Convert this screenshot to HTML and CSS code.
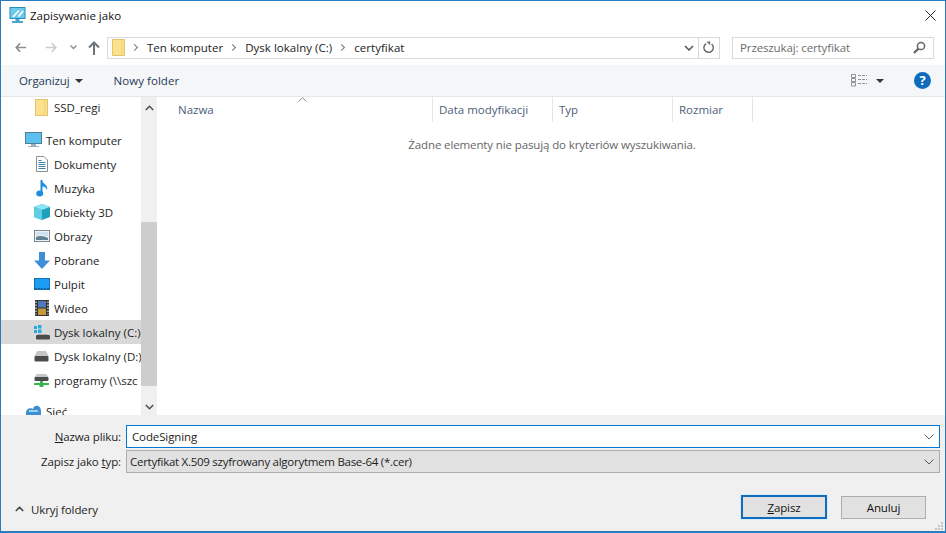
FILE: index.html

```html
<!DOCTYPE html>
<html lang="pl">
<head>
<meta charset="UTF-8">
<title>Zapisywanie jako</title>
<link rel="stylesheet" href="styles.css">
</head>
<body>
<div class="dialog">

  <header class="titlebar">
    <svg class="app-icon" width="17" height="17" viewBox="0 0 17 17">
      <rect x="1" y=".5" width="15" height="11" fill="#6ccbec" stroke="#2a8cb4"/>
      <path d="M4 10 L10 3.500 M9.500 9.500 L14 4" stroke="#fff" stroke-width="1.600"/>
      <path d="M6.500 12 h4 v2 h3.500 v2 h-11 v-2 h3.500z" fill="#46a8cc"/>
    </svg>
    <span class="title">Zapisywanie jako</span>
    <svg class="close" width="11" height="11" viewBox="0 0 11 11"><path d="M.5 .5 L10.500 10.500 M10.500 .5 L.5 10.500" stroke="#222" fill="none"/></svg>
  </header>

  <nav class="navbar">
    <div class="nav-buttons">
      <svg width="12" height="11" viewBox="0 0 14 12"><path d="M6 1 L1.500 6 L6 11 M2 6 H13" fill="none" stroke="#8a8f96" stroke-width="2"/></svg>
      <svg class="nav-forward" width="12" height="11" viewBox="0 0 14 12"><path d="M8 1 L12.500 6 L8 11 M12 6 H1" fill="none" stroke="#c9ccd0" stroke-width="2"/></svg>
      <svg class="nav-recent" width="7" height="5" viewBox="0 0 7 5"><path d="M.5 .5 L3.500 3.500 L6.500 .5" fill="none" stroke="#8a8f96" stroke-width="1.400"/></svg>
      <svg class="nav-up" width="12" height="14" viewBox="0 0 12 14"><path d="M1 6.500 L6 1.500 L11 6.500 M6 2 V14" fill="none" stroke="#6f757c" stroke-width="2"/></svg>
    </div>
    <div class="address">
      <svg class="addr-folder" width="13" height="17" viewBox="0 0 13 17"><path d="M.5 .5 H12.500 V16.500 H.5z" fill="#fbe08e" stroke="#e3c367"/><path d="M10 1 V15" stroke="#f3cf72"/></svg>
      <span class="crumb-sep"></span><span class="crumb">Ten komputer</span>
      <span class="crumb-sep"></span><span class="crumb">Dysk lokalny (C:)</span>
      <span class="crumb-sep"></span><span class="crumb">certyfikat</span>
      <svg class="addr-drop" width="10" height="6" viewBox="0 0 10 6"><path d="M1 1 L5 5 L9 1" fill="none" stroke="#555" stroke-width="1.500"/></svg>
      <div class="addr-refresh">
        <svg width="12" height="13" viewBox="0 0 12 13"><path d="M3.200 2.600 A4.700 4.700 0 1 0 8.600 3" fill="none" stroke="#666" stroke-width="1.400"/><path d="M3.500 .5 L7.100 .5 L7.100 4.200z" fill="#666"/></svg>
      </div>
    </div>
    <div class="search">
      <span class="search-text">Przeszukaj: certyfikat</span>
      <svg width="13" height="13" viewBox="0 0 13 13"><circle cx="8" cy="5" r="3.600" fill="none" stroke="#666" stroke-width="1.500"/><path d="M5.400 7.600 L1 12" stroke="#666" stroke-width="2.200"/></svg>
    </div>
  </nav>

  <div class="toolbar">
    <span class="tool">Organizuj</span>
    <span class="caret caret-org"></span>
    <span class="tool tool-new">Nowy folder</span>
    <svg class="view-icon" width="16" height="13" viewBox="0 0 16 13">
      <g fill="none" stroke="#8d9299"><path d="M.5 .5 h4 v3 h-4z M.5 4.500 h4 v3 h-4z M.5 8.500 h4 v3.500 h-4z"/><path d="M7 1.500 h9 M7 5.500 h9 M7 9.500 h9" stroke-dasharray="3 1"/></g>
    </svg>
    <span class="caret caret-view"></span>
    <span class="help">?</span>
  </div>

  <div class="content">
    <aside class="sidebar">
      <ul class="tree">
        <li class="row row-sub">
          <span class="ico"><svg width="13" height="17" viewBox="0 0 13 17"><path d="M.5 .5 H12.500 V16.500 H.5z" fill="#fbe08e" stroke="#e3c367"/><path d="M10 1 V15" stroke="#f3cf72"/></svg></span>
          SSD_regi
        </li>
        <li class="row row-top row-gap">
          <span class="ico"><svg width="17" height="16" viewBox="0 0 17 16"><rect x=".5" y=".5" width="16" height="11" fill="#5cc0ee" stroke="#4b7f99"/><path d="M6 12 h5 v2 h3 v1 H3 v-1 h3z" fill="#a0aeb8"/></svg></span>
          Ten komputer
        </li>
        <li class="row row-sub">
          <span class="ico"><svg width="12" height="16" viewBox="0 0 12 16"><path d="M.5 .5 H8 L11.500 4 V15.500 H.5z" fill="#fff" stroke="#8a9096"/><path d="M2.500 6.500 h7 M2.500 8.500 h7 M2.500 10.500 h7 M2.500 12.500 h7 M2.500 4.500 h3" stroke="#3f7fa6"/></svg></span>
          Dokumenty
        </li>
        <li class="row row-sub">
          <span class="ico"><svg width="12" height="18" viewBox="0 0 12 18"><path d="M5.500 1 V14" stroke="#1e8fe0" stroke-width="2"/><ellipse cx="3.700" cy="14.500" rx="3.500" ry="3" fill="#1e8fe0"/><path d="M5 0 C6 5 12.500 5 11 11 C10 8 8 7.500 5 7z" fill="#1e8fe0"/></svg></span>
          Muzyka
        </li>
        <li class="row row-sub">
          <span class="ico"><svg width="16" height="16" viewBox="0 0 16 16"><path d="M8 0 L16 3 V13 L8 16 L0 13 V3z" fill="#1fa0bd"/><path d="M8 0 L16 3 L8 6 L0 3z" fill="#8fe4f2"/><path d="M0 3 L8 6 V16 L0 13z" fill="#5fd0e4"/></svg></span>
          Obiekty 3D
        </li>
        <li class="row row-sub">
          <span class="ico"><svg width="16" height="12" viewBox="0 0 16 12"><rect x=".5" y=".5" width="15" height="11" fill="#eef3f7" stroke="#7d868e"/><path d="M2 7 C6 5 10 6 14 8 V10 H2z" fill="#5f7f94"/><path d="M2 2 H14 V7 C10 5 6 5 2 6z" fill="#cfe1ef"/></svg></span>
          Obrazy
        </li>
        <li class="row row-sub">
          <span class="ico"><svg width="16" height="17" viewBox="0 0 16 17"><path d="M5 0 H11 V8.500 H16 L8 17 L0 8.500 H5z" fill="#3f8fd8"/></svg></span>
          Pobrane
        </li>
        <li class="row row-sub">
          <span class="ico"><svg width="16" height="12" viewBox="0 0 16 12"><rect x=".5" y=".5" width="15" height="11" fill="#1c9cf2" stroke="#1472b4"/><path d="M1 10.500 h14" stroke="#0e5f9c" stroke-dasharray="2 1"/></svg></span>
          Pulpit
        </li>
        <li class="row row-sub">
          <span class="ico"><svg width="14" height="16" viewBox="0 0 14 16"><rect width="14" height="16" fill="#333"/><rect x="3" y="1" width="8" height="6.500" fill="#4f79b8"/><rect x="3" y="8.500" width="8" height="6.500" fill="#c49a3a"/><path d="M1 1.500 v13 M13 1.500 v13" stroke="#ddd" stroke-dasharray="1.500 1.500" stroke-width="1.300"/></svg></span>
          Wideo
        </li>
        <li class="row row-sub row-selected">
          <span class="ico"><svg width="16" height="16" viewBox="0 0 16 16"><path d="M0 2 h3 v3 H0z M4 1 h3.500 v3.500 H4z M0 6 h3 v3 H0z M4 5.500 h3.500 v3.500 H4z" fill="#27a9e1"/><path d="M4 10 h9 l2 1 H3z" fill="#aaa"/><rect x="2" y="11" width="14" height="4.500" rx="1" fill="#4c4c4c"/></svg></span>
          Dysk lokalny (C:)
        </li>
        <li class="row row-sub">
          <span class="ico"><svg width="15" height="12" viewBox="0 0 15 12"><path d="M3 1 h9 l2.500 5 H.5z" fill="#c5c5c5"/><rect x=".5" y="6" width="14" height="5.500" rx="1" fill="#4c4c4c"/></svg></span>
          Dysk lokalny (D:)
        </li>
        <li class="row row-sub">
          <span class="ico"><svg width="15" height="13" viewBox="0 0 15 13"><path d="M3 0 h9 l2.500 3 H.5z" fill="#c5c5c5"/><rect x=".5" y="3" width="14" height="4" rx="1" fill="#4c4c4c"/><path d="M6 7 h3 v2 H15 v2 H9.500 v2 H5.500 v-2 H0 v-2 h6z" fill="#39b54a"/></svg></span>
          programy (\\szc
        </li>
        <li class="row row-top row-gap-small">
          <span class="ico"><svg width="17" height="16" viewBox="0 0 17 16"><path d="M1 9 C2 4 7 5 8 6 C9 1 16 2 16 8 V14 H1z" fill="#3d8fd0"/><path d="M4 7 h9 v2 H4z" fill="#9fd2ef"/></svg></span>
          Sieć
        </li>
      </ul>
      <div class="scrollbar">
        <svg class="arrow" width="9" height="6" viewBox="0 0 9 6"><path d="M.8 5 L4.500 1.300 L8.200 5" fill="none" stroke="#505050" stroke-width="1.600"/></svg>
        <div class="track"><div class="thumb"></div></div>
        <svg class="arrow arrow-down" width="9" height="6" viewBox="0 0 9 6"><path d="M.8 1 L4.500 4.700 L8.200 1" fill="none" stroke="#505050" stroke-width="1.600"/></svg>
      </div>
    </aside>
    <section class="files">
      <div class="columns">
        <div class="col col-name">Nazwa
          <svg class="sort" width="9" height="5" viewBox="0 0 9 5"><path d="M.5 4.500 L4.500 .8 L8.500 4.500" fill="none" stroke="#8a8f96"/></svg>
        </div>
        <div class="col col-date">Data modyfikacji</div>
        <div class="col col-type">Typ</div>
        <div class="col col-size">Rozmiar</div>
      </div>
      <p class="empty">Żadne elementy nie pasują do kryteriów wyszukiwania.</p>
    </section>
  </div>

  <footer class="bottom">
    <div class="field">
      <label class="field-label"><u>N</u>azwa pliku:</label>
      <div class="combo combo-name">
        <span>CodeSigning</span>
        <svg width="10" height="6" viewBox="0 0 10 6"><path d="M.5 .5 L5 5 L9.500 .5" fill="none" stroke="#666"/></svg>
      </div>
    </div>
    <div class="field">
      <label class="field-label">Zapisz jako <u>t</u>yp:</label>
      <div class="combo combo-type">
        <span>Certyfikat X.509 szyfrowany algorytmem Base-64 (*.cer)</span>
        <svg width="10" height="6" viewBox="0 0 10 6"><path d="M.5 .5 L5 5 L9.500 .5" fill="none" stroke="#555"/></svg>
      </div>
    </div>
    <div class="actions">
      <div class="hide-folders">
        <svg width="9" height="6" viewBox="0 0 9 6"><path d="M.8 5 L4.500 1.300 L8.200 5" fill="none" stroke="#444" stroke-width="1.600"/></svg>
        Ukryj foldery
      </div>
      <button class="btn btn-default"><u>Z</u>apisz</button>
      <button class="btn btn-cancel">Anuluj</button>
    </div>
    <svg class="grip" width="8" height="8" viewBox="0 0 8 8"><path d="M6 0 h2 v2 h-2z M3 3 h2 v2 h-2z M6 3 h2 v2 h-2z M0 6 h2 v2 h-2z M3 6 h2 v2 h-2z M6 6 h2 v2 h-2z" fill="#c4c4c4"/></svg>
  </footer>
</div>
</body>
</html>
```

FILE: styles.css

```css
* { box-sizing: border-box; }
html, body { margin: 0; height: 100%; }
body { font-family: "Open Sans", "Noto Sans", sans-serif; font-size: 11.5px; letter-spacing: -0.12px; color: #1e1e1e; background: #fff; overflow: hidden; }
svg { display: block; flex: none; }
u { text-decoration: underline; }

.dialog { width: 946px; height: 533px; border: 1px solid #2b7cbc; border-bottom-width: 2px; display: flex; flex-direction: column; background: #fff; position: relative; }

.titlebar { height: 29px; display: flex; align-items: center; padding-left: 8px; padding-right: 9px; flex: none; }
.title { margin-left: 4px; color: #111; letter-spacing: 0; }
.close { margin-left: auto; }

.navbar { height: 35px; display: flex; align-items: center; flex: none; }
.nav-buttons { width: 106px; display: flex; align-items: center; padding-left: 14px; }
.nav-forward { margin-left: 18px; }
.nav-recent { margin-left: 13px; }
.nav-up { margin-left: 11px; }

.address { width: 613px; height: 22px; border: 1px solid #d9d9d9; display: flex; align-items: center; padding-left: 4px; letter-spacing: 0.03px; }
.crumb { color: #222; }
.crumb-sep { width: 5px; height: 5px; border-top: 1px solid #777; border-right: 1px solid #777; transform: rotate(45deg); margin: 0 10px 0 7px; }
.addr-drop { margin-left: auto; margin-right: 4px; }
.addr-refresh { width: 21px; height: 20px; border-left: 1px solid #d9d9d9; display: flex; align-items: center; justify-content: center; }

.search { width: 202px; height: 22px; margin-left: 12px; border: 1px solid #d9d9d9; display: flex; align-items: center; justify-content: space-between; padding: 0 7px; }
.search-text { color: #6d6d6d; }

.toolbar { height: 32px; background: #f5f6f7; border-bottom: 1px solid #e6e6e6; display: flex; align-items: center; padding-left: 18px; flex: none; }
.tool { color: #1f3a5a; }
.caret { width: 0; height: 0; border-left: 4px solid transparent; border-right: 4px solid transparent; border-top: 4px solid #333; }
.caret-org { margin-left: 5px; }
.tool-new { margin-left: 31px; letter-spacing: 0.05px; }
.view-icon { margin-left: auto; }
.caret-view { margin-left: 9px; }
.help { width: 17px; height: 17px; margin-left: 30px; margin-right: 14px; border-radius: 50%; background: #0f6cbd; color: #fff; font-weight: 700; font-size: 13px; line-height: 17px; text-align: center; }

.content { flex: 1; display: flex; min-height: 0; }

.sidebar { width: 157px; display: flex; flex: none; overflow: hidden; }
.tree { list-style: none; width: 140px; margin: -2px 0 0; padding: 0; flex: none; overflow: hidden; height: 321px; letter-spacing: 0; }
.row { height: 24px; display: flex; align-items: center; white-space: nowrap; overflow: hidden; }
.ico { width: 17px; display: flex; justify-content: center; flex: none; margin-right: 4px; }
.row-sub { padding-left: 32px; }
.row-top { padding-left: 24px; }
.row-gap { margin-top: 9px; }
.row-gap-small { margin-top: 7px; }
.row-selected { background: #d9d9d9; }

.scrollbar { width: 16px; flex: none; background: #f0f0f0; display: flex; flex-direction: column; align-items: center; margin-right: 1px; height: 319px; }
.arrow { margin: 8px 0; }
.arrow-down { margin-bottom: 6px; }
.track { flex: 1; width: 100%; position: relative; }
.thumb { position: absolute; left: 0; right: 0; top: 103px; height: 164px; background: #cdcdcd; }

.files { flex: 1; padding-left: 1px; }
.columns { height: 25px; display: flex; align-items: stretch; color: #4c607a; letter-spacing: 0; }
.col { border-right: 1px solid #e5e5e5; padding-left: 6px; display: flex; align-items: center; position: relative; }
.col-name { width: 274px; padding-left: 19px; }
.col-date, .col-type { width: 120px; }
.col-size { width: 80px; }
.sort { position: absolute; left: 139px; top: 0; }
.empty { margin: 15px 0 0; text-align: center; color: #666; }

.bottom { height: 116px; background: #f0f0f0; flex: none; padding-top: 10px; position: relative; }
.field { display: flex; align-items: center; margin-bottom: 2px; }
.field-label { width: 120px; text-align: right; color: #1e1e1e; }
.combo { width: 814px; margin-left: 5px; display: flex; align-items: center; justify-content: space-between; padding-right: 5px; }
.combo-name { height: 23px; background: #fff; border: 1px solid #0078d7; padding-left: 5px; }
.combo-type { height: 23px; background: #e1e1e1; border: 1px solid #adadad; padding-left: 3px; letter-spacing: -0.27px; }
.actions { display: flex; align-items: center; margin-top: 22px; padding-left: 14px; }
.hide-folders { display: flex; align-items: center; gap: 7px; color: #1e1e1e; margin-top: 4px; }
.btn { width: 86px; height: 24px; font-family: inherit; font-size: 11.5px; letter-spacing: inherit; color: #111; background: #e1e1e1; border: 1px solid #adadad; padding: 0; }
.btn-default { border: 2px solid #0f6cbd; margin-left: auto; box-shadow: 0 0 0 1px #d8ecf9; }
.btn-cancel { width: 85px; margin-left: 14px; margin-right: 19px; height: 23px; }
.grip { position: absolute; right: 2px; bottom: 1px; }
```
